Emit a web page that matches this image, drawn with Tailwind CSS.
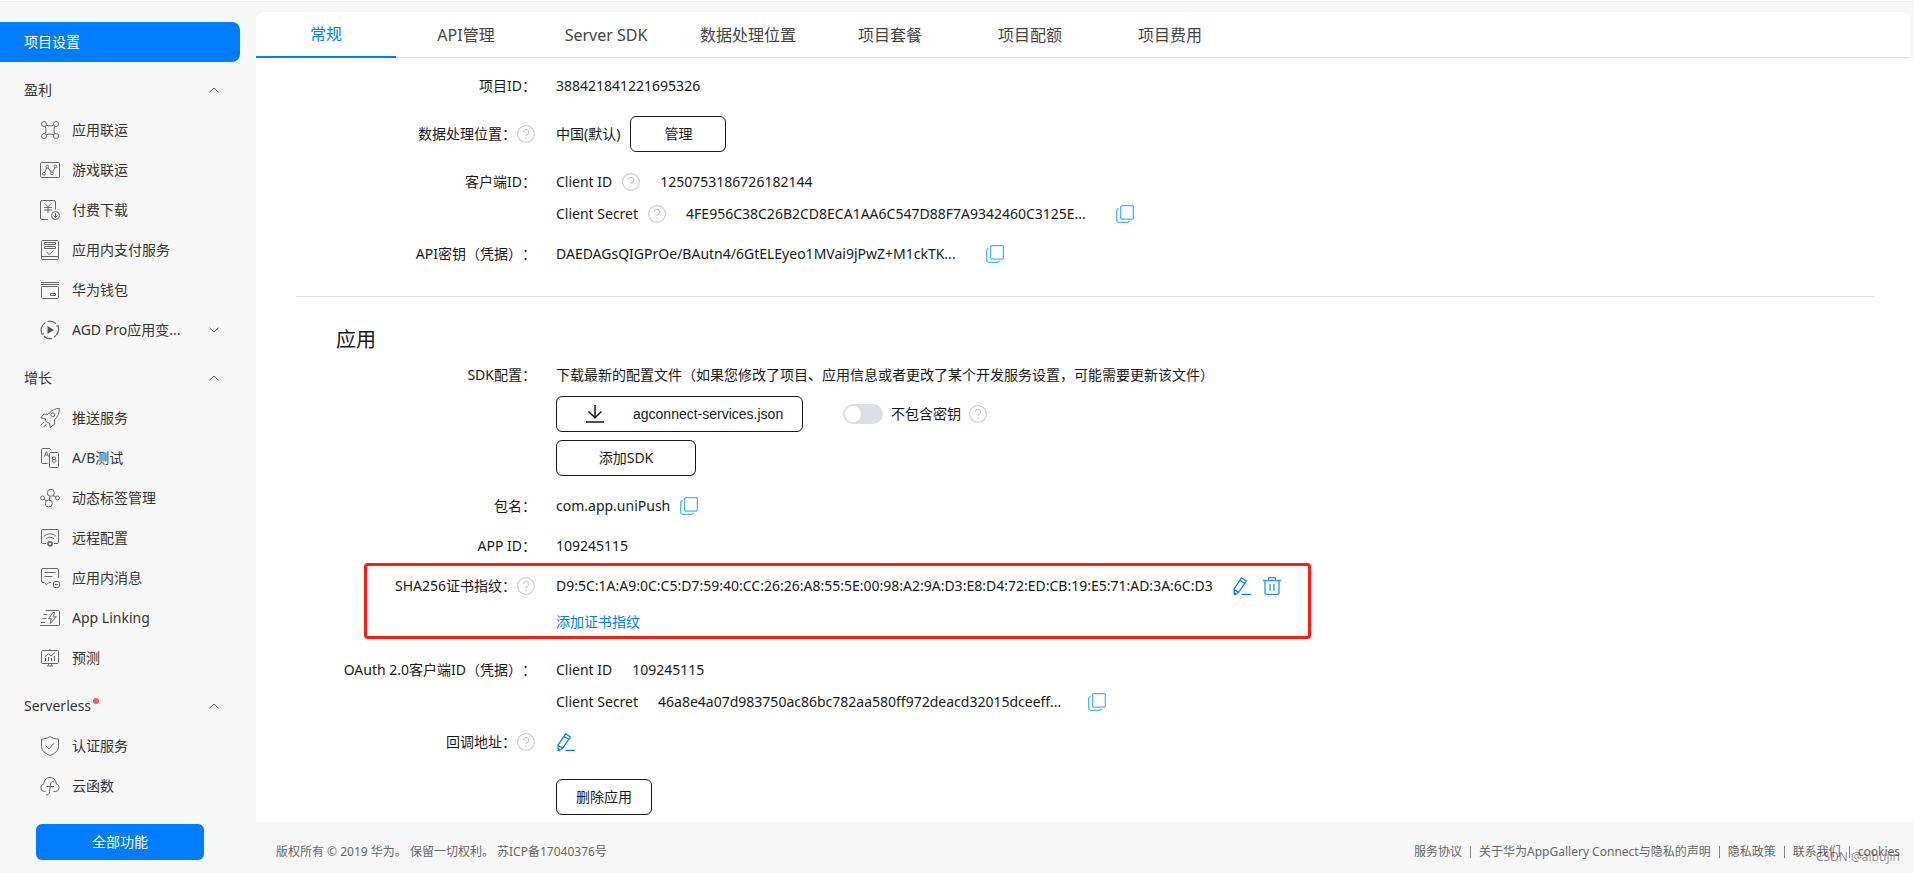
<!DOCTYPE html>
<html lang="zh-CN">
<head>
    <meta charset="UTF-8">
    <meta name="viewport" content="width=device-width, initial-scale=1.0">
    <title>项目设置</title>
    <script src="https://cdn.jsdelivr.net/npm/@tailwindcss/browser@4"></script>
</head>
<body class="relative min-h-screen flex flex-col bg-[#f7f7f7] text-sm leading-5 text-[#191919] font-['Noto_Sans','Noto_Sans_CJK_SC',sans-serif] [text-spacing-trim:space-all]">
    <!-- Shared icons -->
    <svg class="hidden">
        <symbol id="help" viewBox="0 0 18 18" fill="none" stroke="currentColor">
            <circle cx="9" cy="9" r="8.4" stroke-width="1.2"/>
            <path d="M6.4 7.1a2.6 2.6 0 1 1 3.9 2.2c-.9.5-1.3.9-1.3 1.9" stroke-width="1.2"/>
            <path d="M9 12.6v1.3" stroke-width="1.3"/>
        </symbol>
        <symbol id="copy" viewBox="0 0 18 18" fill="none" stroke="currentColor" stroke-width="1.3">
            <rect x="4.6" y=".6" width="12.8" height="13.6" rx="1.6"/>
            <path d="M2.6 3.6A2 2 0 0 0 .7 5.6v9.3a2.4 2.4 0 0 0 2.4 2.4h8.3a2 2 0 0 0 2-1.6"/>
        </symbol>
        <symbol id="edit" viewBox="0 0 18 18" fill="none" stroke="currentColor" stroke-width="1.2">
            <path d="M1 12.2 8.6.8l4.8 3.1-7.7 11.5L1.2 18zM1 12.2l4.7 3.2M7 3.2l4.8 3.2M1.2 15.6l2 1.4"/>
            <path d="M8.5 17.4H18"/>
        </symbol>
        <symbol id="trash" viewBox="0 0 18 18" fill="none" stroke="currentColor" stroke-width="1.3">
            <path d="M0 3.5h18M5.6 3.5V1.6a1 1 0 0 1 1-1h4.8a1 1 0 0 1 1 1v1.9M2 3.5v12.4a1.5 1.5 0 0 0 1.5 1.5h11a1.5 1.5 0 0 0 1.5-1.5V3.5M7 7v7M11 7v7"/>
        </symbol>
        <symbol id="up" viewBox="0 0 10 6" fill="none" stroke="currentColor"><path d="M.5 5.2 5 1l4.5 4.2"/></symbol>
        <symbol id="down" viewBox="0 0 10 6" fill="none" stroke="currentColor"><path d="M.5.8 5 5 9.5.8"/></symbol>
    </svg>

    <div class="h-0.5 border-t border-white bg-[#efefef]"></div>

    <div class="flex grow">
        <!-- Sidebar -->
        <aside class="w-64 shrink-0 pt-5 text-[#333]">
            <a href="#" class="flex items-center w-60 h-10 pl-6 rounded-r-lg bg-[#007dff] text-white">项目设置</a>

            <nav>
                <button type="button" class="flex items-center justify-between w-60 h-10 mt-2 pl-6 pr-[21px]">盈利<svg class="w-2.5 h-1.5 text-[#555]"><use href="#up"/></svg></button>
                <a href="#" class="flex items-center gap-3 w-60 h-10 pl-10">
                    <svg class="size-5" viewBox="0 0 20 20" fill="none" stroke="#666"><circle cx="4" cy="4" r="2.5"/><circle cx="16" cy="4" r="2.5"/><circle cx="4" cy="16" r="2.5"/><circle cx="16" cy="16" r="2.5"/><path d="M6.3 5.2c2.4.9 5 .9 7.4 0M6.3 14.8c2.4-.9 5-.9 7.4 0M5.2 6.3c1 2.4 1 5 0 7.4M14.8 6.3c-1 2.4-1 5 0 7.4"/></svg>
                    应用联运
                </a>
                <a href="#" class="flex items-center gap-3 w-60 h-10 pl-10">
                    <svg class="size-5" viewBox="0 0 20 20" fill="none" stroke="#666"><rect x=".5" y="2.5" width="19" height="15" rx="1"/><circle cx="4" cy="13.8" r="1.4"/><circle cx="7.2" cy="6.6" r="1.4"/><circle cx="12" cy="13.3" r="1.4"/><circle cx="15.4" cy="6.4" r="1.4"/><path d="m4.6 12.4 2-4.5M8 7.9l3.2 4.2M12.6 12l2.2-4.3"/></svg>
                    游戏联运
                </a>
                <a href="#" class="flex items-center gap-3 w-60 h-10 pl-10">
                    <svg class="size-5" viewBox="0 0 20 20" fill="none" stroke="#666"><path d="M8 19.5H2A1.5 1.5 0 0 1 .5 18V2A1.5 1.5 0 0 1 2 .5h12A1.5 1.5 0 0 1 15.5 2v7.5"/><path d="m5 3.500 3 3.300 3-3.300M4 7.500h8M4 10h8M8 7v6"/><circle cx="15.5" cy="15.5" r="4"/><path d="M15.5 13v4.500m-1.900-1.900 1.900 1.900 1.900-1.900"/></svg>
                    付费下载
                </a>
                <a href="#" class="flex items-center gap-3 w-60 h-10 pl-10">
                    <svg class="size-5" viewBox="0 0 20 20" fill="none" stroke="#666"><rect x="1.5" y=".5" width="17" height="19" rx="1"/><path d="M4.500 2.500h11v2h-11zM4.500 6.500h11v2h-11zM1.500 16.500h17M6.500 12l2.700 2.500 4.500-4"/></svg>
                    应用内支付服务
                </a>
                <a href="#" class="flex items-center gap-3 w-60 h-10 pl-10">
                    <svg class="size-5" viewBox="0 0 20 20" fill="none" stroke="#666"><path d="M1 2.500h18M1 4.500h18"/><rect x="1.5" y="6.5" width="17" height="12" rx="1"/><path d="M10.500 13.500h5v2h-5z"/></svg>
                    华为钱包
                </a>
                <div class="flex items-center justify-between w-60 h-10 pl-10 pr-[21px]">
                    <a href="#" class="flex items-center gap-3">
                        <svg class="size-5" viewBox="0 0 20 20" fill="none" stroke="#666" stroke-width="1.2"><path d="M7.500 1.500A9 9 0 0 1 16 3.800M18 6a9 9 0 0 1-4 11M12 18.500a9 9 0 0 1-8-2.300M2 14A9 9 0 0 1 5.500 2.400"/><path d="m16.200 6.300 2.500-.8M3.900 13.500l-2.500 1"/><path d="m7.500 6 6.300 4-6.300 4z" fill="#555" stroke="none"/></svg>
                        AGD Pro应用变...
                    </a>
                    <button type="button" aria-label="展开"><svg class="w-2.5 h-1.5 text-[#555]"><use href="#down"/></svg></button>
                </div>

                <button type="button" class="flex items-center justify-between w-60 h-10 mt-2 pl-6 pr-[21px]">增长<svg class="w-2.5 h-1.5 text-[#555]"><use href="#up"/></svg></button>
                <a href="#" class="flex items-center gap-3 w-60 h-10 pl-10">
                    <svg class="size-5" viewBox="0 0 20 20" fill="none" stroke="#666"><path d="M19.400.500c-3.500 0-6.800 1-9.400 3.800L8 6.400 4 6 .8 9.800l4.500.7 0 2 2 2.300 2.200.2.700 4.600 4.500-3.500-.3-4.200c3.400-2.900 5-7 5-11.400z"/><circle cx="12.8" cy="6.8" r="1.9"/><path d="M4 14.200.600 17.500M6.500 16l-3.200 3.300"/></svg>
                    推送服务
                </a>
                <a href="#" class="flex items-center gap-3 w-60 h-10 pl-10">
                    <svg class="size-5" viewBox="0 0 20 20" fill="none" stroke="#666"><path d="M7.500 15.500h-5a1 1 0 0 1-1-1v-13a1 1 0 0 1 1-1h7a1 1 0 0 1 1 1V2"/><path d="m4.500 8.500 2-5 2 5M5.200 7h2.600"/><rect x="9.5" y="4.5" width="9" height="15" rx="1"/><path d="M12.500 9h2a1.200 1.200 0 0 1 0 2.500h-2zM12.500 11.500h2.300a1.200 1.200 0 0 1 0 2.500h-2.300z"/></svg>
                    A/B测试
                </a>
                <a href="#" class="flex items-center gap-3 w-60 h-10 pl-10">
                    <svg class="size-5" viewBox="0 0 20 20" fill="none" stroke="#666"><circle cx="10.8" cy="4.8" r="3.5"/><circle cx="8.8" cy="15.5" r="3.5"/><circle cx="2.5" cy="10" r="2"/><circle cx="17.5" cy="10" r="2"/><path d="m10 8.200-.8 3.900M4.300 11l1.900 2M13 7.500l2.800 1.400"/></svg>
                    动态标签管理
                </a>
                <a href="#" class="flex items-center gap-3 w-60 h-10 pl-10">
                    <svg class="size-5" viewBox="0 0 20 20" fill="none" stroke="#666"><path d="M6 15.500H2.500a1 1 0 0 1-1-1v-12a1 1 0 0 1 1-1h15a1 1 0 0 1 1 1v12a1 1 0 0 1-1 1H14"/><path d="M3.800 8.300c3.600-3.200 8.800-3.200 12.400 0M6 10.800c2.400-2 5.600-2 8 0"/><circle cx="10" cy="15.8" r="2" stroke-width="1.8"/></svg>
                    远程配置
                </a>
                <a href="#" class="flex items-center gap-3 w-60 h-10 pl-10">
                    <svg class="size-5" viewBox="0 0 20 20" fill="none" stroke="#666"><path d="M18.500 10V2a1.500 1.500 0 0 0-1.500-1.500H3A1.500 1.500 0 0 0 1.500 2v11A1.500 1.500 0 0 0 3 14.500h1.200l2.300 2.300 2.300-2.300H11M4.500 4.500h11M4.500 8.500h8"/><rect x="13.5" y="13.5" width="6" height="6" rx="1.5"/><path d="M15 16.500h3"/></svg>
                    应用内消息
                </a>
                <a href="#" class="flex items-center gap-3 w-60 h-10 pl-10">
                    <svg class="size-5" viewBox="0 0 20 20" fill="none" stroke="#666"><path d="M5.500 2.500h13a1 1 0 0 1 1 1v13a1 1 0 0 1-1 1H0M3.500 6.500h4M2.500 10.500h4M1 14.500h4"/><path d="M13 4.500 8.500 10.700h2.700l-.9 4.800 6-6.700h-3.100l1.600-4.300z"/></svg>
                    App Linking
                </a>
                <a href="#" class="flex items-center gap-3 w-60 h-10 pl-10">
                    <svg class="size-5" viewBox="0 0 20 20" fill="none" stroke="#666"><rect x="1.5" y="2.5" width="17" height="13" rx="1"/><path d="M10 1v1.500M8.500 15.500v2M11.500 15.500v2M7 18h6M5.500 13v-3M8.500 13V9M11.500 13v-3M14.500 13V8M5 8.500l3.500-2.700L11 8l4-3.500"/></svg>
                    预测
                </a>

                <button type="button" class="flex items-center justify-between w-60 h-10 mt-2 pl-6 pr-[21px]">
                    <span class="flex items-start gap-0.5">Serverless<span class="size-1.5 mt-0.5 rounded-full bg-[#fa5a5a]"></span></span>
                    <svg class="w-2.5 h-1.5 text-[#555]"><use href="#up"/></svg>
                </button>
                <a href="#" class="flex items-center gap-3 w-60 h-10 pl-10">
                    <svg class="size-5" viewBox="0 0 20 20" fill="none" stroke="#666"><path d="M10 .600c2.500 1.600 5.300 2.400 8.500 2.500v7.400c0 4-3.500 7-8.500 9-5-2-8.500-5-8.500-9V3.100C4.700 3 7.500 2.200 10 .600z"/><path d="m5.800 9.800 3.200 3 5-5.600"/></svg>
                    认证服务
                </a>
                <a href="#" class="flex items-center gap-3 w-60 h-10 pl-10">
                    <svg class="size-5" viewBox="0 0 20 20" fill="none" stroke="#666"><path d="M5.500 15.500H4.300a3.800 3.800 0 0 1-.5-7.500C4 4 6.500 1.500 10 1.500S16 4 16.200 8a3.800 3.800 0 0 1-.5 7.500h-2.200"/><path d="M13.800 5.800c-1.900-.8-3 .3-3.300 2.300l-.9 7.400c-.3 2.500-1.600 3.700-3.600 3.300M6.500 10.500h7.500"/></svg>
                    云函数
                </a>
            </nav>

            <button type="button" class="block w-[168px] h-9 mt-[18px] ml-9 mb-3 rounded-md bg-[#007dff] text-white">全部功能</button>
        </aside>

        <div class="grow flex flex-col">
            <main class="pt-2.5">
                <!-- Tabs -->
                <div class="flex h-[46px] mr-1 rounded-t-lg border-b border-[#dfdfdf] bg-white text-base text-[#444]">
                    <button type="button" class="min-w-[140px] h-[46px] px-6 pt-2 pb-2 border-b-2 border-[#007dff] text-[#007dff]">常规</button>
                    <button type="button" class="min-w-[140px] px-6 pt-2 pb-2">API管理</button>
                    <button type="button" class="min-w-[140px] px-6 pt-2 pb-2">Server SDK</button>
                    <button type="button" class="min-w-[140px] px-6 pt-2 pb-2">数据处理位置</button>
                    <button type="button" class="min-w-[140px] px-6 pt-2 pb-2">项目套餐</button>
                    <button type="button" class="min-w-[140px] px-6 pt-2 pb-2">项目配额</button>
                    <button type="button" class="min-w-[140px] px-6 pt-2 pb-2">项目费用</button>
                </div>

                <div class="bg-white pt-[18px] pb-[7px] whitespace-nowrap">
                    <!-- Project info -->
                    <div class="space-y-5">
                        <div class="flex gap-5">
                            <div class="w-[280px] text-right">项目ID：</div>
                            <div>388421841221695326</div>
                        </div>
                        <div class="flex items-center gap-5">
                            <div class="w-[280px] flex items-center justify-end">数据处理位置：<svg class="size-[18px] mx-px text-[#ccc]"><use href="#help"/></svg></div>
                            <div class="flex items-center gap-2.5">中国(默认)<button type="button" class="w-24 h-9 rounded-md border border-[#191919]">管理</button></div>
                        </div>
                        <div class="flex gap-5">
                            <div class="w-[280px] text-right">客户端ID：</div>
                            <div class="space-y-3">
                                <div class="flex items-center">Client ID<svg class="size-[18px] ml-2.5 mr-5 text-[#ccc]"><use href="#help"/></svg>1250753186726182144</div>
                                <div class="flex items-center">Client Secret<svg class="size-[18px] ml-2.5 mr-5 text-[#ccc]"><use href="#help"/></svg><span class="w-[420px]">4FE956C38C26B2CD8ECA1AA6C547D88F7A9342460C3125E...</span><button type="button" aria-label="复制" class="ml-2.5"><svg class="size-[18px] text-[#4db1ff]"><use href="#copy"/></svg></button></div>
                            </div>
                        </div>
                        <div class="flex gap-5">
                            <div class="w-[280px] text-right">API密钥（凭据）：</div>
                            <div class="flex items-center"><span class="w-[420px]">DAEDAGsQIGPrOe/BAutn4/6GtELEyeo1MVai9jPwZ+M1ckTK...</span><button type="button" aria-label="复制" class="ml-2.5"><svg class="size-[18px] text-[#4db1ff]"><use href="#copy"/></svg></button></div>
                        </div>
                    </div>

                    <hr class="mt-8 ml-10 mr-10 border-[#dfdfdf]">

                    <!-- App info -->
                    <h2 class="mt-[29px] ml-20 text-xl">应用</h2>
                    <div class="mt-[11px] space-y-5">
                        <div class="flex gap-5">
                            <div class="w-[280px] text-right">SDK配置：</div>
                            <div>
                                <p>下载最新的配置文件（如果您修改了项目、应用信息或者更改了某个开发服务设置，可能需要更新该文件）</p>
                                <div class="flex items-center mt-[11px]">
                                    <button type="button" class="flex items-center w-[247px] h-9 pl-7 rounded-md border border-[#191919] font-['Liberation_Sans',sans-serif]">
                                        <svg class="w-5 h-[18px] mr-7" viewBox="0 0 20 18" fill="none" stroke="#191919" stroke-width="1.5"><path d="M10 0v12.500M3.500 6.500l6.500 6.300 6.500-6.300M1 17h18"/></svg>
                                        agconnect-services.json
                                    </button>
                                    <input id="no-key" type="checkbox" class="appearance-none w-10 h-5 ml-10 rounded-full bg-[#dcdfe6] before:block before:size-4 before:mt-0.5 before:ml-0.5 before:rounded-full before:bg-white">
                                    <label for="no-key" class="ml-2">不包含密钥</label>
                                    <svg class="size-[18px] ml-2 text-[#ccc]"><use href="#help"/></svg>
                                </div>
                                <button type="button" class="block w-[140px] h-9 mt-2 rounded-md border border-[#191919]">添加SDK</button>
                            </div>
                        </div>
                        <div class="flex gap-5">
                            <div class="w-[280px] text-right">包名：</div>
                            <div class="flex items-center">com.app.uniPush<button type="button" aria-label="复制" class="ml-2.5"><svg class="size-[18px] text-[#4db1ff]"><use href="#copy"/></svg></button></div>
                        </div>
                        <div class="flex gap-5">
                            <div class="w-[280px] text-right">APP ID：</div>
                            <div>109245115</div>
                        </div>
                        <div class="relative flex gap-5">
                            <div class="w-[280px] h-5 flex items-center justify-end">SHA256证书指纹：<svg class="size-[18px] mx-px text-[#ccc]"><use href="#help"/></svg></div>
                            <div>
                                <div class="flex items-center">
                                    <span class="w-[665px]">D9:5C:1A:A9:0C:C5:D7:59:40:CC:26:26:A8:55:5E:00:98:A2:9A:D3:E8:D4:72:ED:CB:19:E5:71:AD:3A:6C:D3</span>
                                    <button type="button" aria-label="编辑" class="ml-3"><svg class="size-[18px] text-[#007dff]"><use href="#edit"/></svg></button>
                                    <button type="button" aria-label="删除" class="ml-3"><svg class="size-[18px] text-[#2a91ff]"><use href="#trash"/></svg></button>
                                </div>
                                <a href="#" class="block mt-4 text-[#007dff]">添加证书指纹</a>
                            </div>
                            <!-- Highlight frame -->
                            <div class="absolute -top-[13px] -bottom-[7px] left-[108px] w-[947px] rounded-sm border-3 border-[#ff1c10] pointer-events-none"></div>
                        </div>
                        <div class="flex gap-5 pt-2">
                            <div class="w-[280px] text-right">OAuth 2.0客户端ID（凭据）：</div>
                            <div class="space-y-3">
                                <div class="flex items-center gap-5">Client ID<span>109245115</span></div>
                                <div class="flex items-center">Client Secret<span class="w-[420px] ml-5">46a8e4a07d983750ac86bc782aa580ff972deacd32015dceeff...</span><button type="button" aria-label="复制" class="ml-2.5"><svg class="size-[18px] text-[#4db1ff]"><use href="#copy"/></svg></button></div>
                            </div>
                        </div>
                        <div class="flex gap-5">
                            <div class="w-[280px] flex items-center justify-end">回调地址：<svg class="size-[18px] mx-px text-[#ccc]"><use href="#help"/></svg></div>
                            <button type="button" aria-label="编辑" class="px-px"><svg class="size-[18px] text-[#007dff]"><use href="#edit"/></svg></button>
                        </div>
                        <button type="button" class="block w-24 h-9 mt-[27px] ml-[300px] rounded-md border border-[#191919]">删除应用</button>
                    </div>
                </div>
            </main>

            <!-- Footer -->
            <footer class="grow flex items-center justify-between pl-5 pr-3.5 pt-2 text-xs text-[#666]">
                <p>版权所有 © 2019 华为。 保留一切权利。 苏ICP备17040376号</p>
                <div class="flex items-center gap-2">
                    <a href="#">服务协议</a>
                    <span class="w-px h-3 bg-[#888]"></span>
                    <a href="#">关于华为AppGallery Connect与隐私的声明</a>
                    <span class="w-px h-3 bg-[#888]"></span>
                    <a href="#">隐私政策</a>
                    <span class="w-px h-3 bg-[#888]"></span>
                    <a href="#">联系我们</a>
                    <span class="w-px h-3 bg-[#888]"></span>
                    <a href="#">cookies</a>
                </div>
            </footer>
        </div>
    </div>

    <div class="absolute right-3.5 bottom-2 text-xs text-black/45 pointer-events-none">CSDN @aibujin</div>
</body>
</html>
